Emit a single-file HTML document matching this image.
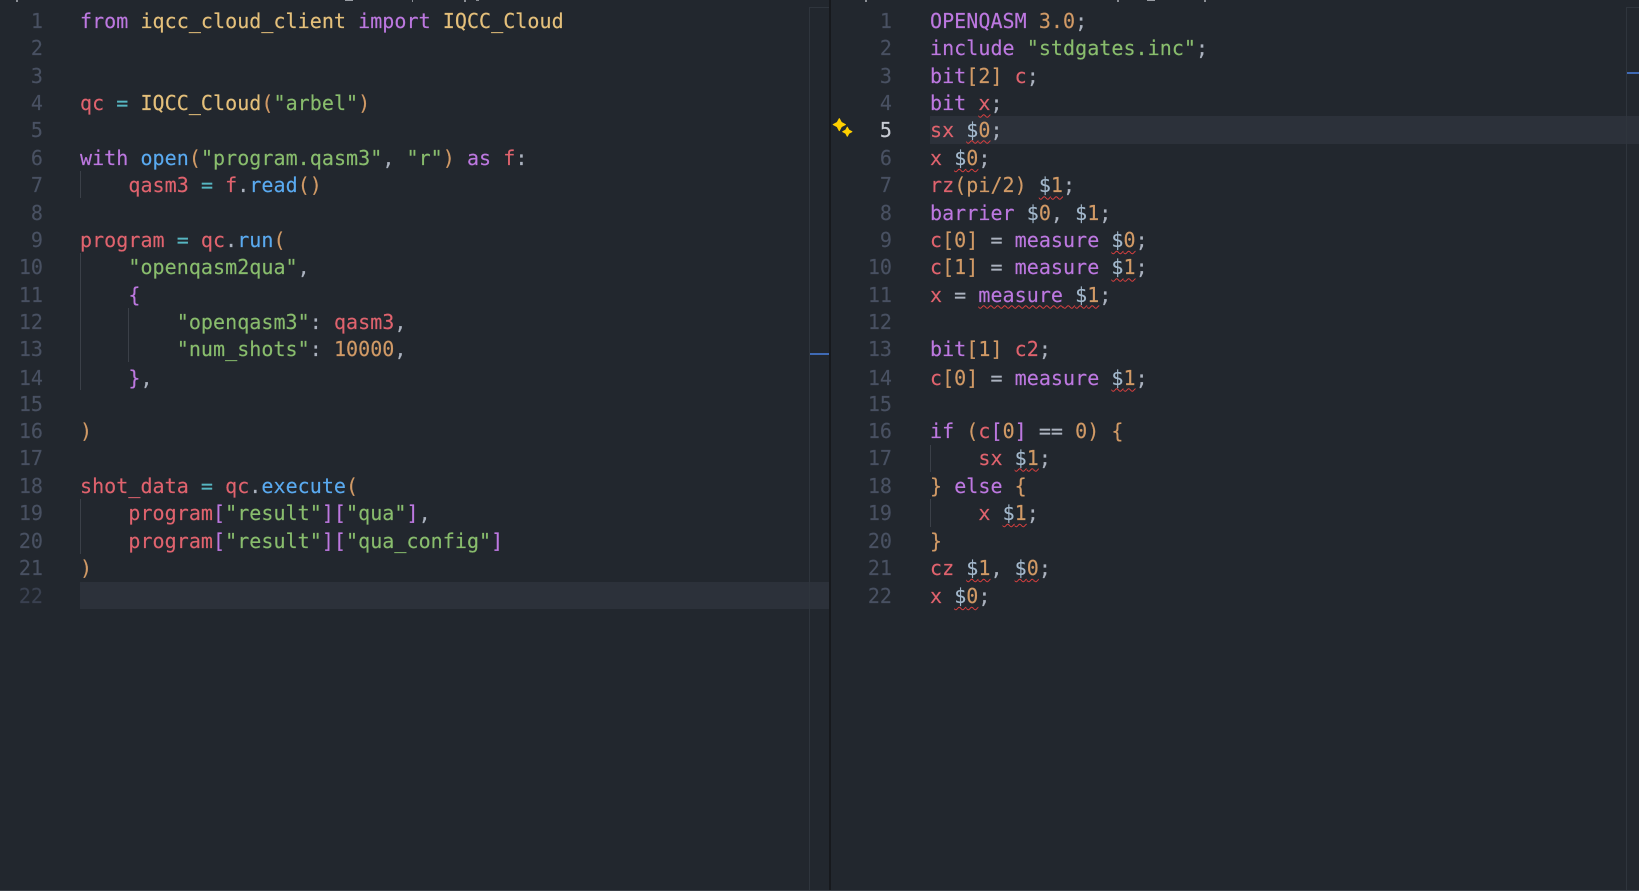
<!DOCTYPE html>
<html><head><meta charset="utf-8"><style>
html,body{margin:0;padding:0;width:1639px;height:891px;overflow:hidden;background:#22272e}
body{position:relative;font-family:"DejaVu Sans Mono","Liberation Mono",monospace;font-size:20px;letter-spacing:.05px;color:#abb2bf}
.a{position:absolute}
.code,.nums{position:absolute;top:8.34px;line-height:27.333px;font-variant-ligatures:none;filter:blur(.25px);-webkit-text-stroke:.15px currentColor}
.code div,.nums div{height:27.333px;white-space:pre;position:relative}
.code div.u,.nums div.u{top:-1px}
.code div.v,.nums div.v{top:1px}
.nums{text-align:right;color:#495162;width:40px}
.k{color:#bd78e0}.r{color:#e0636e}.g{color:#89bd6d}.o{color:#d19a66}.y{color:#e5c07b}.b{color:#5aaaf0}.c{color:#56b6c2}.t{color:#abb2bf}.d{color:#a3b8cc}
.s{text-decoration:underline wavy #d9403f 1px;text-underline-offset:3px}
</style></head><body>
<div class="a" style="left:80px;top:582px;width:749px;height:27px;background:#2c313a"></div>
<div class="a" style="left:930px;top:116px;width:709px;height:28px;background:#2c313a"></div>
<div class="a" style="left:809px;top:7px;width:1px;height:883px;background:#2f353d"></div>
<div class="a" style="left:809px;top:7px;width:20px;height:1px;background:#2f353d"></div>
<div class="a" style="left:1626px;top:7px;width:1px;height:883px;background:#2f353d"></div>
<div class="a" style="left:1626px;top:7px;width:13px;height:1px;background:#2f353d"></div>
<div class="a" style="left:829px;top:0;width:2px;height:890px;background:#17191d"></div>
<div class="a" style="left:0;top:890px;width:1639px;height:1px;background:#3a4048"></div>
<div class="a" style="left:810px;top:353px;width:19px;height:2px;background:#3f6ab5"></div>
<div class="a" style="left:1627px;top:72px;width:12px;height:2px;background:#3f6ab5"></div>
<div class="a" style="left:80px;top:171px;width:1px;height:27px;background:#3b4048"></div>
<div class="a" style="left:80px;top:253px;width:1px;height:137px;background:#3b4048"></div>
<div class="a" style="left:128px;top:308px;width:1px;height:54px;background:#3b4048"></div>
<div class="a" style="left:80px;top:499px;width:1px;height:55px;background:#3b4048"></div>
<div class="a" style="left:930px;top:445px;width:1px;height:27px;background:#3b4048"></div>
<div class="a" style="left:930px;top:499px;width:1px;height:28px;background:#3b4048"></div>
<div class="a" style="left:16px;top:0;width:2px;height:2px;background:#8b8f96"></div>
<div class="a" style="left:345px;top:0;width:8px;height:1px;background:#9a9ea5"></div>
<div class="a" style="left:412px;top:0;width:1px;height:2px;background:#8b8f96"></div>
<div class="a" style="left:464px;top:0;width:2px;height:2px;background:#8b8f96"></div>
<div class="a" style="left:476px;top:0;width:3px;height:1px;background:#8b8f96"></div>
<div class="a" style="left:865px;top:0;width:2px;height:2px;background:#8b8f96"></div>
<div class="a" style="left:1117px;top:0;width:2px;height:2px;background:#8b8f96"></div>
<div class="a" style="left:1147px;top:0;width:8px;height:1px;background:#9a9ea5"></div>
<div class="a" style="left:1204px;top:0;width:2px;height:2px;background:#8b8f96"></div>
<svg class="a" style="left:832px;top:117px" width="22" height="21" viewBox="0 0 22 21"><path d="M7.3 1.6L9.4 5.5L13.4 7.6L9.4 9.7L7.3 13.6L5.2 9.7L1.2 7.6L5.2 5.5Z" fill="#ffd000" stroke="#ffd000" stroke-width="1" stroke-linejoin="round"/><path d="M15.3 10.2L16.9 13.1L19.9 14.7L16.9 16.3L15.3 19.2L13.7 16.3L10.7 14.7L13.7 13.1Z" fill="#ffd000" stroke="#ffd000" stroke-width="1" stroke-linejoin="round"/></svg>
<div class="nums" style="left:3px"><div>1</div><div class="u">2</div><div>3</div><div>4</div><div class="u">5</div><div>6</div><div>7</div><div>8</div><div>9</div><div>10</div><div>11</div><div>12</div><div>13</div><div class="v">14</div><div>15</div><div>16</div><div class="u">17</div><div>18</div><div>19</div><div>20</div><div>21</div><div class="v" style="color:#3a4150">22</div></div>
<div class="nums" style="left:852px"><div>1</div><div class="u">2</div><div>3</div><div>4</div><div class="u" style="color:#c8ccd4">5</div><div>6</div><div>7</div><div>8</div><div>9</div><div>10</div><div>11</div><div>12</div><div>13</div><div class="v">14</div><div>15</div><div>16</div><div class="u">17</div><div>18</div><div>19</div><div>20</div><div>21</div><div class="v">22</div></div>
<div class="code" style="left:80px">
<div><span class="k">from</span> <span class="y">iqcc_cloud_client</span> <span class="k">import</span> <span class="y">IQCC_Cloud</span></div>
<div> </div>
<div> </div>
<div><span class="r">qc</span> <span class="c">=</span> <span class="y">IQCC_Cloud</span><span class="o">(</span><span class="g">"arbel"</span><span class="o">)</span></div>
<div> </div>
<div><span class="k">with</span> <span class="b">open</span><span class="o">(</span><span class="g">"program.qasm3"</span>, <span class="g">"r"</span><span class="o">)</span> <span class="k">as</span> <span class="r">f</span>:</div>
<div>    <span class="r">qasm3</span> <span class="c">=</span> <span class="r">f</span>.<span class="b">read</span><span class="o">()</span></div>
<div> </div>
<div><span class="r">program</span> <span class="c">=</span> <span class="r">qc</span>.<span class="b">run</span><span class="o">(</span></div>
<div>    <span class="g">"openqasm2qua"</span>,</div>
<div>    <span class="k">{</span></div>
<div>        <span class="g">"openqasm3"</span>: <span class="r">qasm3</span>,</div>
<div>        <span class="g">"num_shots"</span>: <span class="o">10000</span>,</div>
<div class="v">    <span class="k">}</span>,</div>
<div> </div>
<div><span class="o">)</span></div>
<div> </div>
<div><span class="r">shot_data</span> <span class="c">=</span> <span class="r">qc</span>.<span class="b">execute</span><span class="o">(</span></div>
<div>    <span class="r">program</span><span class="k">[</span><span class="g">"result"</span><span class="k">][</span><span class="g">"qua"</span><span class="k">]</span>,</div>
<div>    <span class="r">program</span><span class="k">[</span><span class="g">"result"</span><span class="k">][</span><span class="g">"qua_config"</span><span class="k">]</span></div>
<div><span class="o">)</span></div>
<div> </div>
</div>
<div class="code" style="left:930px">
<div><span class="k">OPENQASM</span> <span class="o">3.0</span>;</div>
<div class="u"><span class="k">include</span> <span class="g">"stdgates.inc"</span>;</div>
<div><span class="k">bit</span><span class="o">[2]</span> <span class="r">c</span>;</div>
<div><span class="k">bit</span> <span class="r s">x</span>;</div>
<div class="u"><span class="r">sx</span> <span class="s"><span class="d">$</span><span class="o">0</span></span>;</div>
<div><span class="r">x</span> <span class="s"><span class="d">$</span><span class="o">0</span></span>;</div>
<div><span class="r">rz</span><span class="o">(pi/2)</span> <span class="s"><span class="d">$</span><span class="o">1</span></span>;</div>
<div><span class="k">barrier</span> <span class="d">$</span><span class="o">0</span>, <span class="d">$</span><span class="o">1</span>;</div>
<div><span class="r">c</span><span class="o">[0]</span> = <span class="k">measure</span> <span class="s"><span class="d">$</span><span class="o">0</span></span>;</div>
<div><span class="r">c</span><span class="o">[1]</span> = <span class="k">measure</span> <span class="s"><span class="d">$</span><span class="o">1</span></span>;</div>
<div><span class="r">x</span> = <span class="s"><span class="k">measure</span> <span class="d">$</span><span class="o">1</span></span>;</div>
<div> </div>
<div><span class="k">bit</span><span class="o">[1]</span> <span class="r">c2</span>;</div>
<div class="v"><span class="r">c</span><span class="o">[0]</span> = <span class="k">measure</span> <span class="s"><span class="d">$</span><span class="o">1</span></span>;</div>
<div> </div>
<div><span class="k">if</span> <span class="o">(</span><span class="r">c</span><span class="k">[</span><span class="o">0</span><span class="k">]</span> == <span class="o">0)</span> <span class="o">{</span></div>
<div class="u">    <span class="r">sx</span> <span class="s"><span class="d">$</span><span class="o">1</span></span>;</div>
<div><span class="o">}</span> <span class="k">else</span> <span class="o">{</span></div>
<div>    <span class="r">x</span> <span class="s"><span class="d">$</span><span class="o">1</span></span>;</div>
<div><span class="o">}</span></div>
<div><span class="r">cz</span> <span class="s"><span class="d">$</span><span class="o">1</span></span>, <span class="s"><span class="d">$</span><span class="o">0</span></span>;</div>
<div class="v"><span class="r">x</span> <span class="s"><span class="d">$</span><span class="o">0</span></span>;</div>
</div>
</body></html>
